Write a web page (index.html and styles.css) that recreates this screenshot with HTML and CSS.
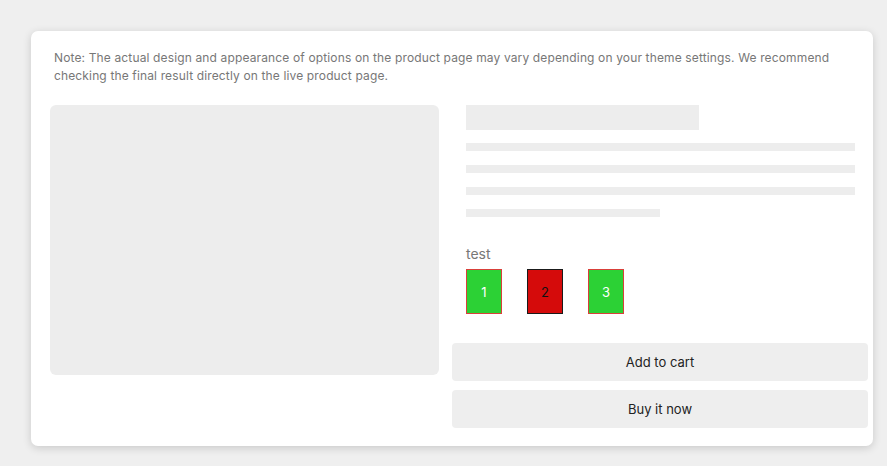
FILE: index.html
```html
<!DOCTYPE html>
<html lang="en">
<head>
    <meta charset="UTF-8" />
    <title>Product preview</title>
    <link rel="stylesheet" href="styles.css">
</head>
<body>
    <div class="card">
        <p class="note">Note: The actual design and appearance of options on the product page may vary depending on your theme settings. We recommend checking the final result directly on the live product page.</p>
        <div class="product">
            <div class="media"></div>
            <div class="info">
                <div class="details">
                    <div class="sk-title"></div>
                    <div class="sk-line"></div>
                    <div class="sk-line"></div>
                    <div class="sk-line"></div>
                    <div class="sk-line short"></div>
                    <p class="option-name">test</p>
                    <div class="swatches">
                        <div class="swatch green">1</div>
                        <div class="swatch red">2</div>
                        <div class="swatch green">3</div>
                    </div>
                </div>
                <button class="btn">Add to cart</button>
                <button class="btn">Buy it now</button>
            </div>
        </div>
    </div>
</body>
</html>
```
FILE: styles.css
```css
html,
body {
    margin: 0;
    height: 100%;
    background: #efefef;
    font-family: Inter, "Noto Sans", sans-serif;
}
body {
    padding: 31px 14px 0 31px;
    box-sizing: border-box;
}
.card {
    background: #fff;
    border-radius: 7px;
    box-shadow: 0 2px 8px rgba(0, 0, 0, 0.16);
    padding: 18px 5px 18px 19px;
}
.note {
    margin: 0 0 20px;
    padding: 0 20px 0 4px;
    font-size: 12px;
    line-height: 18px;
    letter-spacing: 0.14px;
    color: #777;
}
.product {
    display: grid;
    grid-template-columns: 389px 1fr;
    gap: 13px;
}
.media {
    height: 270px;
    background: #ededed;
    border-radius: 6px;
}
.details {
    padding: 0 13px 0 14px;
}
.sk-title {
    width: 233px;
    height: 25px;
    background: #ededed;
    margin-bottom: 13px;
}
.sk-line {
    height: 8px;
    background: #ededed;
    margin-bottom: 14px;
}
.sk-line.short {
    width: 194px;
    margin-bottom: 0;
}
.option-name {
    margin: 27px 0 5px;
    font-size: 14px;
    line-height: 20px;
    color: #777;
}
.swatches {
    display: flex;
    gap: 25px;
}
.swatch {
    height: 43px;
    padding: 0 12px;
    min-width: 10px;
    display: flex;
    align-items: center;
    justify-content: center;
    font-size: 13px;
}
.swatch.green {
    background: #2cd135;
    border: 1px solid #d9403a;
    color: #fff;
}
.swatch.red {
    background: #d50b0b;
    border: 1px solid #1a1a1a;
    color: #111;
}
.btn {
    display: block;
    width: 100%;
    height: 38px;
    border: 0;
    border-radius: 4px;
    background: #eee;
    font-family: inherit;
    font-size: 13px;
    color: #222;
    margin-top: 9px;
}
.details + .btn {
    margin-top: 29px;
}
```
